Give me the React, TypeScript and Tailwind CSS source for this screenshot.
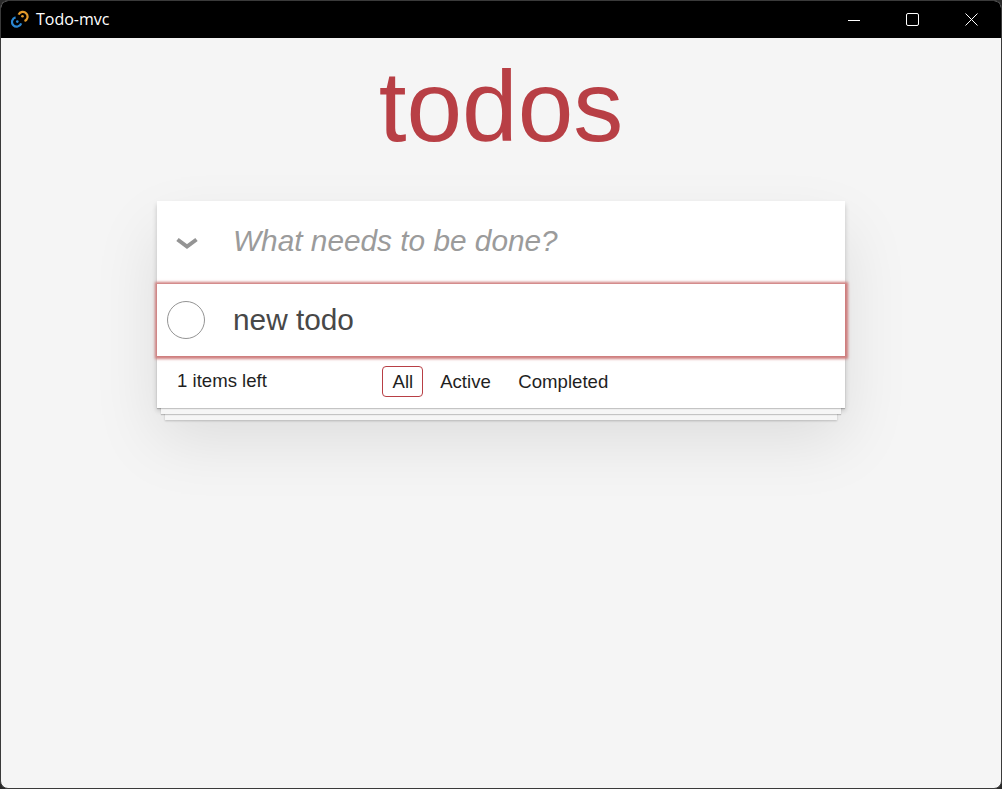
export default function App() {
  return (
    <div className="w-[1002px] h-[789px] bg-[#2a2a2a] overflow-hidden" style={{ fontFamily: '"Liberation Sans", Arial, sans-serif' }}>
      <div className="w-[1002px] h-[789px] rounded-[8px] overflow-hidden border border-[#3a3a3a] bg-[#f5f5f5] flex flex-col">
        <header className="h-[37px] shrink-0 bg-black flex items-center text-white">
          <svg className="ml-[10px] mr-[7px] mt-[-1px]" width="18" height="18" viewBox="0 0 18 18" fill="none">
            <path d="M7.6 4.6A4.7 4.7 0 1 1 13.5 11" stroke="#e39a2a" strokeWidth="2.2" />
            <path d="M10.2 13.4A4.7 4.7 0 1 1 4.6 7.4" stroke="#2a86d0" strokeWidth="2.2" />
            <circle cx="11.5" cy="6.2" r="1.3" fill="#e39a2a" />
            <circle cx="6.3" cy="11.6" r="1.3" fill="#2a86d0" />
          </svg>
          <span className="text-[16px] leading-none mt-[-1px]" style={{ fontFamily: '"Open Sans", sans-serif' }}>Todo-mvc</span>
          <div className="ml-auto flex items-center">
            <button className="w-[58px] h-[37px] flex items-center justify-center pr-[2px]">
              <svg width="12" height="12" viewBox="0 0 12 12"><path d="M0 6.5H12" stroke="#fff" strokeWidth="1" /></svg>
            </button>
            <button className="w-[58px] h-[37px] flex items-center justify-center pr-[2px]">
              <svg width="13" height="13" viewBox="0 0 13 13" fill="none"><rect x="0.5" y="0.5" width="12" height="12" rx="1.5" stroke="#fff" strokeWidth="1" /></svg>
            </button>
            <button className="w-[59px] h-[37px] flex items-center justify-center">
              <svg width="13" height="13" viewBox="0 0 13 13" fill="none"><path d="M.5.5L12.5 12.5M12.5.5L.5 12.5" stroke="#fff" strokeWidth="1" /></svg>
            </button>
          </div>
        </header>
        <main className="flex-1 flex flex-col items-center">
          <h1 className="text-[100px] leading-none text-[#b83f45] mt-[18px] h-[145px]">todos</h1>
          <section className="w-[688px] bg-white shadow-[0_2.5px_5px_0_rgba(0,0,0,0.2),0_31px_62px_0_rgba(0,0,0,0.1)]">
            <div className="h-[83px] pb-[4px] flex items-center">
              <svg className="ml-[18px] mt-[8px]" width="24" height="16" viewBox="0 0 24 16" fill="none">
                <path d="M2.5 2.5L12 9.5L21.5 2.5" stroke="#949494" strokeWidth="4" />
              </svg>
              <span className="ml-[34px] text-[29.8px] leading-none italic text-[#9b9b9b]">What needs to be done?</span>
            </div>
            <div className="h-[72px] relative flex items-center bg-white shadow-[0_0_2.5px_2.5px_#cf7d7d]">
              <span className="ml-[10px] w-[38px] h-[38px] rounded-full border border-[#949494]" />
              <span className="ml-[28px] text-[29.8px] leading-none text-[#484848]">new todo</span>
            </div>
            <footer className="h-[52px] pb-[1px] flex items-center text-[18.6px] text-[#1f1f1f] leading-none shadow-[0_1px_1px_rgba(0,0,0,0.2),0_10px_0_-4px_#f6f6f6,0_11px_1px_-4px_rgba(0,0,0,0.2),0_20px_0_-8px_#f6f6f6,0_21px_2px_-8px_rgba(0,0,0,0.2)]">
              <span className="ml-[20px] w-[205px]">1 items left</span>
              <div className="flex items-center gap-[7.5px]">
                <a className="h-[31px] pl-[9.5px] pr-[8.5px] flex items-center rounded-[4px] border border-[#b83f45]"><span className="mt-[1px]">All</span></a>
                <a className="h-[31px] px-[9px] flex items-center rounded-[4px] border border-transparent"><span className="mt-[1px]">Active</span></a>
                <a className="h-[31px] px-[9px] flex items-center rounded-[4px] border border-transparent"><span className="mt-[1px]">Completed</span></a>
              </div>
            </footer>
          </section>
        </main>
      </div>
    </div>
  );
}
